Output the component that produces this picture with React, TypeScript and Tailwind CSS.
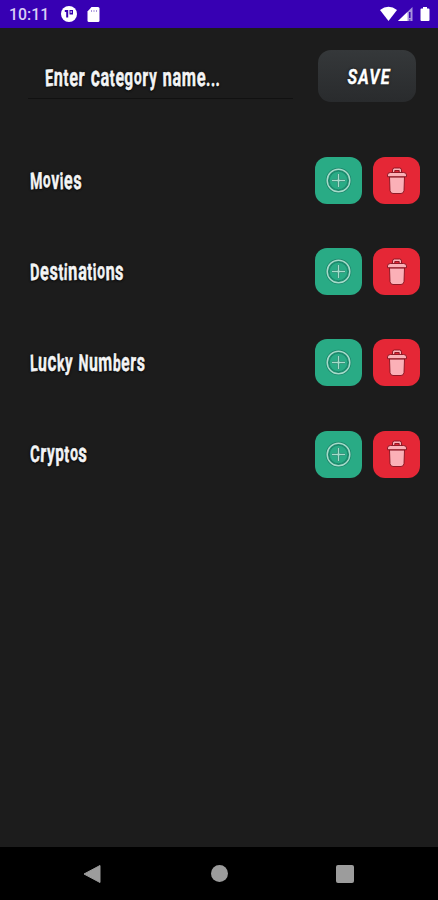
const categories = [
  { name: 'Movies', stretch: 'scale-x-[0.62]' },
  { name: 'Destinations', stretch: 'scale-x-[0.635]' },
  { name: 'Lucky Numbers', stretch: 'scale-x-[0.615]' },
  { name: 'Cryptos', stretch: 'scale-x-[0.645]' },
];

const tilts = ['-rotate-2', 'rotate-3', 'rotate-0', '-rotate-3', 'rotate-3'];

function letterSize(letter: string) {
  if (letter === ' ') return 'w-[9px]';
  if (letter === 'o') return 'text-[22px] -translate-y-[2px]';
  if (letter === 'c') return 'text-[28px]';
  if ('aemnrsuvwxz'.includes(letter)) return 'text-[26px]';
  if ('gpy'.includes(letter)) return 'text-[24px] -translate-y-px';
  return 'text-[23px]';
}

// Uneven, hand-cut lettering: each character gets its own size and tilt.
function Lettering({ text, stretch }: { text: string; stretch: string }) {
  return (
    <span
      className={`-mt-[2px] block h-[28px] w-0 origin-left whitespace-pre font-['Roboto',sans-serif] text-[23px] font-bold leading-[28px] tracking-[0.8px] text-[#f4f4f4] [-webkit-text-stroke:0.5px_#f4f4f4] [text-shadow:0_0_3px_#000,0_1px_2px_#000] ${stretch}`}
    >
      {text.split('').map((letter, i) => (
        <span key={i} className={`inline-block leading-[28px] ${letterSize(letter)} ${tilts[i % tilts.length]}`}>
          {letter}
        </span>
      ))}
    </span>
  );
}

function StatusBar() {
  return (
    <header className="flex h-[28px] shrink-0 items-center bg-[#3700b3] pl-[9px] pr-[8px]">
      <span className="w-[52px] origin-left scale-x-[0.93] font-['Roboto',sans-serif] text-[17px] font-medium leading-[28px] text-[#d9cdf5]">10:11</span>
      <svg className="h-[16px] w-[16px]" viewBox="0 0 16 16">
        <circle cx="8" cy="8" r="8" fill="#fff" />
        <path d="M3.800 4H7.200v7.500H5.200V6H3.800zM8.500 4H12v4.500H8.500z" fill="#3700b3" />
        <path d="M9.500 5.300h1.300v1.500H9.500z" fill="#fff" />
      </svg>
      <svg className="ml-[10px] h-[15px] w-[13px]" viewBox="0 0 13 15">
        <path d="M4.5 0H11q1.5 0 1.5 1.5v12Q12.500 15 11 15H2Q.5 15 .5 13.500V4.500z" fill="#fff" />
        <path d="M4.500 3v2M7 3v2M9.500 3v2" stroke="#a895dc" strokeWidth="1" />
      </svg>
      <svg className="ml-auto h-[16px] w-[50px]" viewBox="0 0 50 16">
        <path d="M0 4Q8.500-2.500 17 4L8.500 15z" fill="#fff" />
        <path d="M32.500 1v14H18z" fill="#a793dc" />
        <path d="M27.500 6v9H18z" fill="#fff" />
        <path d="M29.800 6v6M29.800 13.500v1" stroke="#3700b3" strokeWidth="1.500" />
        <path d="M43 1h4v1.500h1.500q1 0 1 1V14q0 1-1 1h-7q-1 0-1-1V3.500q0-1 1-1H43z" fill="#fff" />
      </svg>
    </header>
  );
}

function AddButton() {
  return (
    <button aria-label="Add item" className="flex h-[47px] w-[47px] items-center justify-center rounded-[12px] bg-[#29ab85]">
      <svg className="h-[27px] w-[27px]" viewBox="0 0 27 27" fill="none">
        <circle cx="13.500" cy="13.500" r="11.300" stroke="#1a8368" strokeWidth="3" />
        <circle cx="13.500" cy="13.500" r="11.300" stroke="#a5dcca" strokeWidth="1.500" />
        <circle cx="13.500" cy="13.500" r="9.300" stroke="#1a8368" strokeWidth=".9" />
        <path d="M13.500 7v13M7 13.500h13" stroke="#1a8368" strokeWidth="3" />
        <path d="M13.500 7v13M7 13.500h13" stroke="#a5dcca" strokeWidth="1.500" />
      </svg>
    </button>
  );
}

function DeleteButton() {
  return (
    <button aria-label="Delete category" className="flex h-[47px] w-[47px] items-center justify-center rounded-[12px] bg-[#e52736]">
      <svg className="h-[28px] w-[22px]" viewBox="0 0 22 28" stroke="#86111d" strokeWidth=".9" strokeLinejoin="round">
        <path d="M3.500 10h15l-.5 13.500q-.3 3-3 3H7q-2.700 0-3-3z" fill="#fbb0b7" />
        <path d="M6.500 6V3q0-2 2-2h5q2 0 2 2v3h-2.300V3.500H8.800V6z" fill="#fbb0b7" />
        <path d="M1.500 9.700V8q0-2.500 3-2.500h13q3 0 3 2.500v1.700z" fill="#fbb0b7" />
      </svg>
    </button>
  );
}

export default function App() {
  return (
    <div className="flex h-[900px] w-[438px] flex-col overflow-hidden bg-[#1c1c1c]">
      <StatusBar />
      <main className="flex-1">
        <div className="flex h-[107px] items-start pl-[28px] pt-[22px]">
          <div className="flex h-[49px] w-[265px] border-b border-[#111] pl-[17px] pt-[15px]">
            <Lettering text="Enter category name..." stretch="scale-x-[0.635]" />
          </div>
          <button className="ml-[25px] flex h-[52px] w-[98px] items-center justify-center rounded-[13px] bg-linear-to-b from-[#35383a] to-[#292b2d] pl-[5px] pt-px">
            <span className="scale-x-[0.77] font-['Roboto',sans-serif] text-[21px] font-bold italic leading-[28px] tracking-[1.5px] text-white [-webkit-text-stroke:0.4px_#fff] [text-shadow:0_0_3px_#000]">
              SAVE
            </span>
          </button>
        </div>
        <ul>
          {categories.map(({ name, stretch }) => (
            <li key={name} className="flex h-[91.2px] items-center pl-[30px] pr-[18px]">
              <Lettering text={name} stretch={stretch} />
              <div className="ml-auto flex gap-[11px]">
                <AddButton />
                <DeleteButton />
              </div>
            </li>
          ))}
        </ul>
      </main>
      <nav className="flex h-[53px] shrink-0 items-center bg-black pl-[83px] text-[#9c9c9c]">
        <svg className="h-[20px] w-[18px]" viewBox="0 0 18 20">
          <path d="M17 1.500v17L1 10z" fill="currentColor" stroke="currentColor" strokeLinejoin="round" />
        </svg>
        <div className="ml-[110px] h-[17px] w-[17px] rounded-full bg-[#9c9c9c]" />
        <div className="ml-[108px] h-[18px] w-[18px] rounded-[2px] bg-[#9c9c9c]" />
      </nav>
    </div>
  );
}
